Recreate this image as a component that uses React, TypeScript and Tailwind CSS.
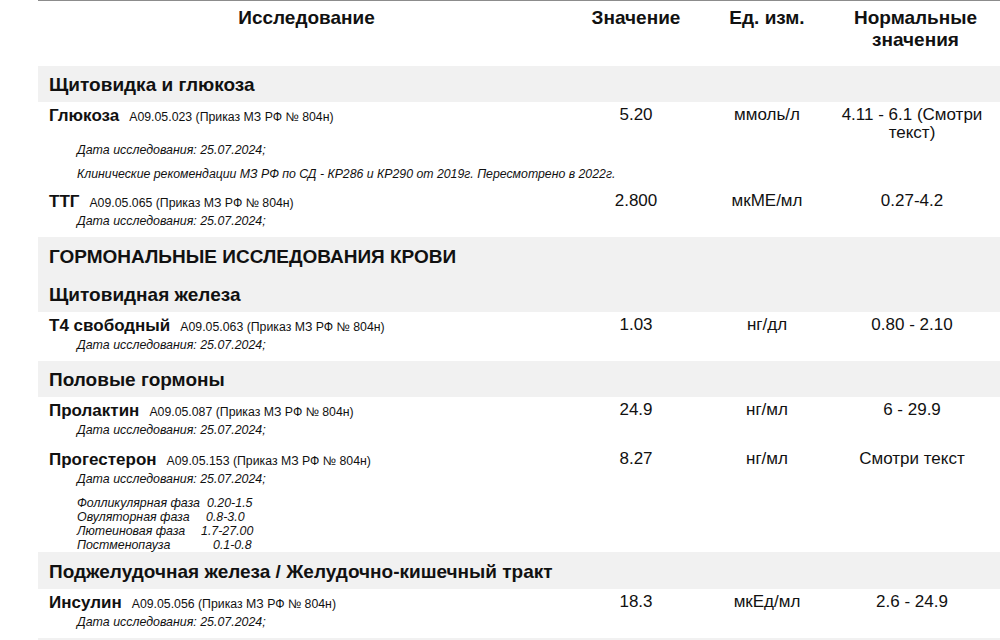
import React from "react";

type Item = {
  name: string;
  code: string;
  value: string;
  unit: string;
  norm: string;
  note?: string;
  phases?: boolean;
};

const COLS = "grid grid-cols-[537px_122px_140px_163px]";
const DATE = "Дата исследования: 25.07.2024;";

const phases = [
  { label: "Фолликулярная фаза", value: "0.20-1.5", shift: "ml-0" },
  { label: "Овуляторная фаза", value: "0.8-3.0", shift: "ml-[-1px]" },
  { label: "Лютеиновая фаза", value: "1.7-27.00", shift: "ml-[-6px]" },
  { label: "Постменопауза", value: "0.1-0.8", shift: "ml-[6px]" },
];

const Band = ({ title, h = "h-[37px]" }: { title: string; h?: string }) => (
  <div className={`${h} bg-[#f1f1f1] pl-[11px] pt-[3px] flex items-center text-[19px] font-bold`}>
    {title}
  </div>
);

const Row = ({ item }: { item: Item }) => (
  <div className={item.phases ? "pb-0" : item.note ? "pb-[6px]" : "pb-[8px]"}>
    <div className={COLS}>
      <div className="h-[25px] pt-[1px] pl-[11px] leading-[25px] whitespace-nowrap">
        <span className="text-[17px] font-bold">{item.name}</span>
        <span className="ml-[10px] text-[12.3px]">{item.code}</span>
      </div>
      <div className="pt-[4px] text-center text-[17px] leading-[18px]">{item.value}</div>
      <div className="pt-[4px] text-center text-[17px] leading-[18px]">{item.unit}</div>
      <div className="pt-[4px] pr-[13px] text-center text-[17px] leading-[18px]">{item.norm}</div>
    </div>
    <div className="pl-[39px] italic text-[12.4px] leading-[16px]">{DATE}</div>
    {item.note && (
      <div className="mt-[8px] pl-[39px] italic text-[12.3px] leading-[16px]">{item.note}</div>
    )}
    {item.phases && (
      <div className="mt-[9px] pl-[39px] italic text-[12.4px] leading-[14px]">
        {phases.map((p) => (
          <div key={p.label} className="flex">
            <span className="w-[130px]">{p.label}</span>
            <span className={p.shift}>{p.value}</span>
          </div>
        ))}
      </div>
    )}
  </div>
);

export default function App() {
  return (
    <div className="min-h-screen bg-white text-[#111] font-['Liberation_Sans',Arial,sans-serif]">
      <div className="ml-[38px] border-t border-[#8c8c8c]">
        {/* Table header */}
        <div className={`${COLS} h-[65px] pt-[6px] text-[19px] font-bold leading-[22px] text-center`}>
          <div>Исследование</div>
          <div>Значение</div>
          <div>Ед. изм.</div>
          <div className="pr-[6px]">
            Нормальные
            <br />
            значения
          </div>
        </div>

        <Band title="Щитовидка и глюкоза" h="h-[36px]" />
        <Row
          item={{
            name: "Глюкоза",
            code: "A09.05.023 (Приказ МЗ РФ № 804н)",
            value: "5.20",
            unit: "ммоль/л",
            norm: "4.11 - 6.1 (Смотри текст)",
            note: "Клинические рекомендации МЗ РФ по СД - КР286 и КР290 от 2019г. Пересмотрено в 2022г.",
          }}
        />
        <Row
          item={{
            name: "ТТГ",
            code: "A09.05.065 (Приказ МЗ РФ № 804н)",
            value: "2.800",
            unit: "мкМЕ/мл",
            norm: "0.27-4.2",
          }}
        />

        <Band title="ГОРМОНАЛЬНЫЕ ИССЛЕДОВАНИЯ КРОВИ" h="h-[38px]" />
        <Band title="Щитовидная железа" />
        <Row
          item={{
            name: "Т4 свободный",
            code: "A09.05.063 (Приказ МЗ РФ № 804н)",
            value: "1.03",
            unit: "нг/дл",
            norm: "0.80 - 2.10",
          }}
        />

        <Band title="Половые гормоны" h="h-[36px]" />
        <Row
          item={{
            name: "Пролактин",
            code: "A09.05.087 (Приказ МЗ РФ № 804н)",
            value: "24.9",
            unit: "нг/мл",
            norm: "6 - 29.9",
          }}
        />
        <Row
          item={{
            name: "Прогестерон",
            code: "A09.05.153 (Приказ МЗ РФ № 804н)",
            value: "8.27",
            unit: "нг/мл",
            norm: "Смотри текст",
            phases: true,
          }}
        />

        <Band title="Поджелудочная железа / Желудочно-кишечный тракт" />
        <Row
          item={{
            name: "Инсулин",
            code: "A09.05.056 (Приказ МЗ РФ № 804н)",
            value: "18.3",
            unit: "мкЕд/мл",
            norm: "2.6 - 24.9",
          }}
        />
        <div className="h-[20px] bg-[#f1f1f1]" />
      </div>
    </div>
  );
}
